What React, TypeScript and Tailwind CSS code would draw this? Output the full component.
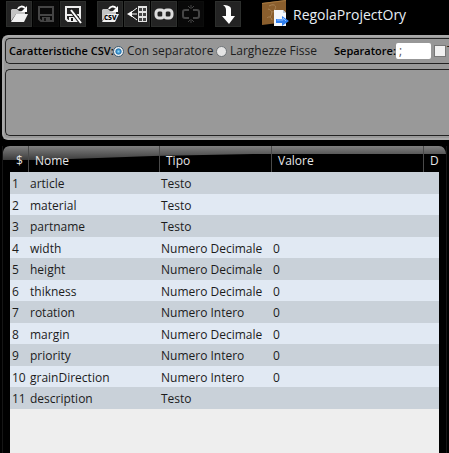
import type { ReactNode } from "react";

type Row = { name: string; type: string; value?: string };

const rows: Row[] = [
  { name: "article", type: "Testo" },
  { name: "material", type: "Testo" },
  { name: "partname", type: "Testo" },
  { name: "width", type: "Numero Decimale", value: "0" },
  { name: "height", type: "Numero Decimale", value: "0" },
  { name: "thikness", type: "Numero Decimale", value: "0" },
  { name: "rotation", type: "Numero Intero", value: "0" },
  { name: "margin", type: "Numero Decimale", value: "0" },
  { name: "priority", type: "Numero Intero", value: "0" },
  { name: "grainDirection", type: "Numero Intero", value: "0" },
  { name: "description", type: "Testo" },
];

function ToolButton({ label, disabled, children }: { label: string; disabled?: boolean; children: ReactNode }) {
  return (
    <button
      type="button"
      aria-label={label}
      disabled={disabled}
      className="size-[26px] shrink-0 border border-[#2c2e2c] bg-[#232323] text-[#eee] disabled:border-[#0c0d0c] disabled:bg-[#090909] disabled:text-[#454545]"
    >
      <svg viewBox="0 0 24 24" className="size-6" fill="none">
        {children}
      </svg>
    </button>
  );
}

function Folder() {
  return (
    <>
      <path d="M4 19V8l1-1h5l2 2h6v3H9z" fill="#c4c4c4" />
      <path d="M4 20l5-8h12l-4 8z" fill="#f0f0f0" />
      <path d="M11 7c1-3 5-3 7-1" stroke="#fff" strokeWidth="2" />
      <path d="M20 4v6h-6z" fill="#fff" />
    </>
  );
}

function Floppy() {
  return (
    <>
      <path d="M5 5h14v14H7l-2-2z" stroke="currentColor" strokeWidth="2" />
      <path d="M5 12h14v2H5z" fill="currentColor" />
      <path d="M8 15h8v4H8z" fill="currentColor" />
      <path d="M10 16h2v3h-2z" fill="#161616" />
    </>
  );
}

function PackageLogo() {
  return (
    <svg viewBox="0 0 28 27" className="h-[27px] w-7 shrink-0" aria-hidden="true">
      <path d="M0 3L24 0v22L0 25z" fill="#8a5e2d" />
      <path d="M0 3L24 0v1L0 4z" fill="#a87a40" />
      <path d="M7 6c5-3 8 0 6 3s4 1 3 5M6 9c4 1 5 4 2 8m2-5c4-1 5 1 4 4M5 18c2-2 4-1 5 2" fill="none" stroke="#a98355" />
      <path d="M12 10h9l3 3v13H12z" fill="#f4f7fb" />
      <path d="M21 10v3h3z" fill="#b9c8da" />
      <path d="M14 19h6v-3l7 5-7 5v-3h-6z" fill="#2f7ff0" />
      <path d="M15 20h6v-2l3 3" fill="none" stroke="#8fc0ff" />
    </svg>
  );
}

const radio =
  "size-[11px] shrink-0 appearance-none rounded-full border border-[#6f7478] bg-[#e4e4e4] checked:border-[#3c5a70] checked:bg-[radial-gradient(circle,#8fdcff_0,#1b6fb0_42%,#f0f0f0_55%)]";

const head = "h-[26px] border-l border-[#4a4a4a] py-0 pr-0 pl-[6px] pt-[3px] text-left font-normal";
const cell = "overflow-hidden whitespace-nowrap pt-[2px] pr-0 pb-0 pl-[2px]";

export default function App() {
  return (
    <div className="flex min-h-screen flex-col overflow-hidden bg-black font-['Open_Sans','Noto_Sans',sans-serif] text-[12px] leading-4 text-[#1c1c1c]">
      <header className="flex h-[35px] items-start gap-[11px] pl-[6px]">
        <div className="flex gap-px pt-px">
          <ToolButton label="Apri">
            <Folder />
          </ToolButton>
          <ToolButton label="Salva" disabled>
            <Floppy />
          </ToolButton>
          <ToolButton label="Salva con nome">
            <Floppy />
            <path d="M10 8l10 13" stroke="#232323" strokeWidth="4" />
            <path d="M10 8l10 13" stroke="#fff" strokeWidth="2" />
          </ToolButton>
        </div>
        <div className="flex gap-px pt-px">
          <ToolButton label="Apri CSV">
            <Folder />
            <text x="6" y="18" fill="#000" stroke="#eee" strokeWidth="1" paintOrder="stroke" className="text-[8px] font-bold">
              csv
            </text>
          </ToolButton>
          <ToolButton label="Collega colonne">
            <path d="M13 4h9v16h-9z" fill="#e4e4e4" />
            <path d="M14 6h3v3h-3zM18 6h3v3h-3zM14 11h3v3h-3zM18 11h3v3h-3zM14 16h3v3h-3zM18 16h3v3h-3z" fill="#444" />
            <path d="M12 6L4 12l8 6M4 12h8" stroke="#fff" />
            <path d="M2 12l5-3v6z" fill="#fff" />
          </ToolButton>
          <ToolButton label="Collega">
            <rect x="4" y="8" width="8" height="8" rx="3" stroke="#ddd" strokeWidth="3" />
            <rect x="12" y="8" width="8" height="8" rx="3" stroke="#ddd" strokeWidth="3" />
          </ToolButton>
          <ToolButton label="Scollega" disabled>
            <path d="M10 8H6q-2 0-2 2v4q0 2 2 2h4M14 8h4q2 0 2 2v4q0 2-2 2h-4" stroke="currentColor" strokeWidth="2" />
            <path d="M12 3v4M9 4l2 2M15 4l-2 2M12 17v4M9 20l2-2M15 20l-2-2" stroke="currentColor" />
          </ToolButton>
        </div>
        <div className="flex pt-px">
          <ToolButton label="Importa">
            <path d="M7 3c4 0 8 1 8 4v7h4l-6 8-7-8h4V8c0-2-1-4-3-5z" fill="#fff" />
          </ToolButton>
        </div>
        <div className="flex gap-[3px] pl-[10px]">
          <PackageLogo />
          <h1 className="pt-[3px] text-[14px] leading-6 text-[#e8eef4]">RegolaProjectOry</h1>
        </div>
      </header>

      <section className="ml-[2px] h-[105px] overflow-hidden rounded-l-md border-y-2 border-l-2 border-[#a9a9a9] bg-[#999]">
        <div className="ml-px mt-px flex h-[26px] items-center overflow-hidden whitespace-nowrap rounded-l-[5px] border-y border-l border-[#222] bg-[#979797] pl-[3px]">
          <span className="w-[104px] shrink-0 text-[11px] font-semibold text-black">Caratteristiche CSV:</span>
          <label className="flex w-[103px] shrink-0 items-center gap-[3px]">
            <input type="radio" name="mode" defaultChecked className={radio} />
            Con separatore
          </label>
          <label className="flex w-[118px] shrink-0 items-center gap-[3px]">
            <input type="radio" name="mode" className={radio} />
            Larghezze Fisse
          </label>
          <label htmlFor="separator" className="w-[62px] shrink-0 text-[11px] font-semibold text-black">
            Separatore:
          </label>
          <input id="separator" defaultValue=";" className="h-4 w-[35px] shrink-0 rounded-[2px] bg-white pl-[3px] text-[#555]" />
          <label className="ml-[3px] flex shrink-0 items-center gap-px">
            <input type="checkbox" className="size-3 appearance-none border border-[#777] bg-[#f1f1f1]" />T
          </label>
        </div>
        <div className="ml-px mt-[5px] h-[67px] rounded-l-[5px] border-y border-l border-[#222]" />
      </section>

      <main className="relative mx-[2px] mt-[6px] flex grow flex-col border-x border-[#161616] pr-[7px] pl-[7px]">
        <svg viewBox="0 0 443 26" preserveAspectRatio="none" className="absolute inset-x-0 top-0 h-[26px] w-full" aria-hidden="true">
          <defs>
            <linearGradient id="gloss" x1="0" y1="0" x2="0" y2="1">
              <stop offset="0" stopColor="#808080" />
              <stop offset="1" stopColor="#3c3c3c" />
            </linearGradient>
          </defs>
          <path d="M0 14V6Q1 0 7 0H436Q442 0 443 8H250L150 10L40 14z" fill="url(#gloss)" />
        </svg>
        <div className="relative flex grow flex-col">
          <table className="w-full table-fixed border-separate border-spacing-0">
            <colgroup>
              <col className="w-[18px]" />
              <col className="w-[131px]" />
              <col className="w-[112px]" />
              <col className="w-[152px]" />
              <col />
            </colgroup>
            <thead className="text-[#e6e6e6]">
              <tr>
                <th className="h-[26px] p-0 pt-[3px] pl-[6px] text-left font-normal">$</th>
                <th className={head}>Nome</th>
                <th className={head}>Tipo</th>
                <th className={head}>Valore</th>
                <th className={head}>D</th>
              </tr>
            </thead>
            <tbody>
              {rows.map((row, i) => (
                <tr key={row.name} className="h-[22px] bg-[#c9d1d9] even:h-[21px] even:bg-[#e1e9f3]">
                  <td className={cell}>{i + 1}</td>
                  <td className={cell}>{row.name}</td>
                  <td className={cell}>{row.type}</td>
                  <td className={cell}>{row.value}</td>
                  <td className={cell} />
                </tr>
              ))}
            </tbody>
          </table>
          <div className="grow bg-[#eee]" />
        </div>
      </main>
    </div>
  );
}
